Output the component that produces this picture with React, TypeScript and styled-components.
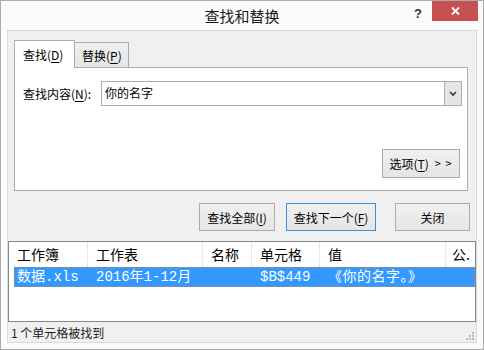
import React from 'react';
import styled, { createGlobalStyle } from 'styled-components';

const Global = createGlobalStyle`
  html, body { margin: 0; padding: 0; background: #fff; }
  body { font-family: "Noto Sans CJK SC", "Noto Sans", sans-serif; }
  * { box-sizing: border-box; }
  u { text-underline-offset: 2px; }
`;

const Window = styled.div`
  width: 484px;
  height: 350px;
  border: 1px solid #ababab;
  background: #fbfbfb;
  display: flex;
  flex-direction: column;
`;

const TitleBar = styled.div`
  height: 29px;
  flex: none;
  display: grid;
  grid-template-columns: 1fr auto 1fr;
  align-items: start;
`;

const Title = styled.div`
  font-size: 15px;
  line-height: 29px;
  color: #1a1a1a;
`;

const Caption = styled.div`
  display: flex;
  justify-content: flex-end;
  align-items: flex-start;
  padding-right: 5px;
`;

const Help = styled.div`
  font-family: "Liberation Sans", sans-serif;
  font-weight: bold;
  font-size: 13px;
  line-height: 13px;
  margin-top: 6px;
  margin-right: 10px;
  color: #333;
`;

const Close = styled.div`
  width: 46px;
  height: 20px;
  background: #c75050;
  display: flex;
  align-items: center;
  justify-content: center;
`;

const Body = styled.div`
  flex: 1;
  padding: 0 6px 6px 6px;
  display: flex;
`;

const Client = styled.div`
  flex: 1;
  border: 1px solid #d9d9d9;
  background: #f0f0f0;
  display: flex;
  flex-direction: column;
`;

const TabRow = styled.div`
  margin-top: 9px;
  padding-left: 6px;
  height: 27px;
  flex: none;
  display: flex;
  align-items: flex-end;
`;

const Tab = styled.div<{ $active?: boolean }>`
  position: relative;
  z-index: ${p => (p.$active ? 1 : 0)};
  width: ${p => (p.$active ? 61 : 55)}px;
  height: ${p => (p.$active ? 28 : 25)}px;
  margin-bottom: ${p => (p.$active ? -1 : 0)}px;
  margin-left: ${p => (p.$active ? 0 : -1)}px;
  border: 1px solid #acacac;
  border-bottom: 0;
  background: ${p => (p.$active ? '#fff' : 'linear-gradient(#f0f0f0, #e5e5e5)')};
  padding-left: ${p => (p.$active ? 8 : 7)}px;
  padding-top: ${p => (p.$active ? 5 : 4)}px;
  font-size: 12px;
  line-height: 17px;
  color: #000;
  white-space: nowrap;
`;

const Panel = styled.div`
  margin: 0 8px 0 6px;
  height: 124px;
  flex: none;
  border: 1px solid #acacac;
  background: #fff;
  padding: 13px 5px 12px 8px;
  display: flex;
  flex-direction: column;
`;

const FieldRow = styled.div`
  display: flex;
  align-items: center;
`;

const Label = styled.div`
  width: 78px;
  font-size: 12px;
  line-height: 17px;
  color: #000;
  white-space: nowrap;
`;

const Combo = styled.div`
  flex: 1;
  height: 25px;
  border: 1px solid #abadb3;
  background: #fff;
  display: flex;
`;

const ComboText = styled.div`
  flex: 1;
  padding-left: 3px;
  font-size: 12px;
  line-height: 21px;
  color: #000;
`;

const DropButton = styled.div`
  width: 17px;
  border-left: 1px solid #acacac;
  background: #e5e5e5;
  display: flex;
  align-items: center;
  justify-content: center;
`;

const Button = styled.div<{ $w: number; $default?: boolean; $gap?: number }>`
  width: ${p => p.$w}px;
  height: 28px;
  margin-right: ${p => p.$gap ?? 0}px;
  border: 1px solid ${p => (p.$default ? '#3c8fe6' : '#acacac')};
  background: linear-gradient(#f0f0f0, #e5e5e5);
  display: flex;
  align-items: center;
  justify-content: center;
  font-size: 12px;
  line-height: 17px;
  color: #000;
  white-space: nowrap;
`;

const OptionsButton = styled(Button)`
  height: 29px;
  margin-top: auto;
  margin-right: 2px;
  align-self: flex-end;
  gap: 6px;
`;

const Arrows = styled.span`
  font-size: 11px;
  letter-spacing: 1px;
`;

const ButtonRow = styled.div`
  margin-top: 12px;
  padding-right: 6px;
  flex: none;
  display: flex;
  justify-content: flex-end;
`;

const List = styled.div`
  margin-top: 10px;
  height: 81px;
  flex: none;
  border: 1px solid #828790;
  background: #fff;
  display: flex;
  flex-direction: column;
`;

const HeaderRow = styled.div`
  display: grid;
  grid-template-columns: 79px 115px 49px 68px 126px 1fr;
  height: 25px;
`;

const HeaderCell = styled.div`
  border-right: 1px solid #e3e8ef;
  padding-left: 8px;
  font-size: 14px;
  line-height: 24px;
  color: #000;
  white-space: nowrap;
  overflow: hidden;
  &:last-child { border-right: 0; padding-left: 6px; }
`;

const DataRow = styled.div<{ $selected?: boolean }>`
  display: grid;
  grid-template-columns: 74px 115px 49px 68px 126px 1fr;
  margin-left: 5px;
  height: 20px;
  background: ${p => (p.$selected ? '#3399ff' : 'transparent')};
  outline: ${p => (p.$selected ? '1px dotted #b08a62' : 'none')};
  outline-offset: -1px;
`;

const DataCell = styled.div<{ $wide?: boolean }>`
  padding-left: 8px;
  font-family: "Liberation Mono", "Noto Sans CJK SC", monospace;
  font-size: 14px;
  line-height: 20px;
  letter-spacing: ${p => (p.$wide ? 0.5 : 0)}px;
  color: #fff;
  white-space: nowrap;
  overflow: hidden;
  &:first-child { padding-left: 3px; }
`;

const StatusBar = styled.div`
  flex: 1;
  display: flex;
  align-items: center;
  padding-left: 3px;
`;

const StatusText = styled.div`
  font-size: 12px;
  line-height: 17px;
  color: #1e1e1e;
`;

const Grip = styled.svg`
  margin-left: auto;
  margin-right: 2px;
  align-self: flex-end;
  margin-bottom: 2px;
`;

const Chevron = () => (
  <svg width="8" height="6" viewBox="0 0 8 6">
    <polyline points="1,1 4,4 7,1" fill="none" stroke="#3c3c3c" strokeWidth="1.7" />
  </svg>
);

const CloseGlyph = () => (
  <svg width="9" height="8" viewBox="0 0 9 8">
    <path d="M1 0.5 L8 7.5 M8 0.5 L1 7.5" stroke="#fff" strokeWidth="1.8" />
  </svg>
);

const GripDots = () => {
  const dots: [number, number][] = [[6, 0], [3, 3], [6, 3], [0, 6], [3, 6], [6, 6]];
  return (
    <Grip width="8" height="8" viewBox="0 0 8 8">
      {dots.map(([x, y], i) => (
        <rect key={i} x={x} y={y} width="2" height="2" fill="#b8b8b8" />
      ))}
    </Grip>
  );
};

export default function App() {
  return (
    <>
      <Global />
      <Window>
        <TitleBar>
          <div />
          <Title>查找和替换</Title>
          <Caption>
            <Help>?</Help>
            <Close>
              <CloseGlyph />
            </Close>
          </Caption>
        </TitleBar>
        <Body>
          <Client>
            <TabRow>
              <Tab $active>
                查找(<u>D</u>)
              </Tab>
              <Tab>
                替换(<u>P</u>)
              </Tab>
            </TabRow>
            <Panel>
              <FieldRow>
                <Label>
                  查找内容(<u>N</u>):
                </Label>
                <Combo>
                  <ComboText>你的名字</ComboText>
                  <DropButton>
                    <Chevron />
                  </DropButton>
                </Combo>
              </FieldRow>
              <OptionsButton $w={78}>
                <span>
                  选项(<u>T</u>)
                </span>
                <Arrows>&gt; &gt;</Arrows>
              </OptionsButton>
            </Panel>
            <ButtonRow>
              <Button $w={76} $gap={11}>
                查找全部(<u>I</u>)
              </Button>
              <Button $w={90} $gap={19} $default>
                查找下一个(<u>F</u>)
              </Button>
              <Button $w={75}>关闭</Button>
            </ButtonRow>
            <List>
              <HeaderRow>
                <HeaderCell>工作簿</HeaderCell>
                <HeaderCell>工作表</HeaderCell>
                <HeaderCell>名称</HeaderCell>
                <HeaderCell>单元格</HeaderCell>
                <HeaderCell>值</HeaderCell>
                <HeaderCell>公.</HeaderCell>
              </HeaderRow>
              <DataRow $selected>
                <DataCell>数据.xls</DataCell>
                <DataCell>2016年1-12月</DataCell>
                <DataCell></DataCell>
                <DataCell>$B$449</DataCell>
                <DataCell $wide>《你的名字。》</DataCell>
                <DataCell></DataCell>
              </DataRow>
            </List>
            <StatusBar>
              <StatusText>1 个单元格被找到</StatusText>
              <GripDots />
            </StatusBar>
          </Client>
        </Body>
      </Window>
    </>
  );
}
